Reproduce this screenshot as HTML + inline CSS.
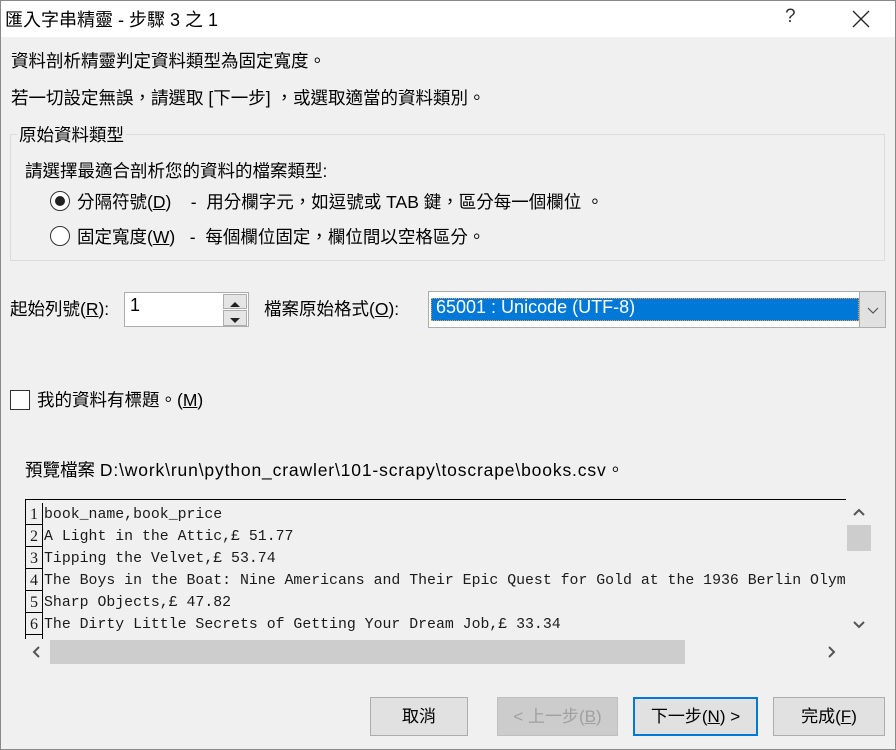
<!DOCTYPE html>
<html><head><meta charset="utf-8"><style>
*{margin:0;padding:0;box-sizing:border-box}
body{width:896px;height:750px;background:#f0f0f0;font-family:"Liberation Sans","Noto Sans CJK TC",sans-serif;font-size:17.5px;color:#000;position:relative;overflow:hidden}
.a{position:absolute;white-space:nowrap}
u{text-decoration:underline}
.btn{position:absolute;top:697px;height:39px;border:1px solid #adadad;background:#e1e1e1;text-align:center;line-height:37px;font-size:17px}
.mono{font-family:"Liberation Mono",monospace;font-size:14.85px;color:#1a1a1a}
.row{position:absolute;left:0;height:22px;line-height:22px}
.num{position:absolute;left:0;width:17px;height:22px;border-right:1px solid #000;border-bottom:1px solid #000;text-align:center;font-family:"Liberation Serif",serif;font-size:16px;line-height:24px}
.txt{position:absolute;left:18px;top:1px}
</style></head><body>
<div class="a" style="left:0;top:0;width:896px;height:750px;border:1px solid #888"></div>
<div class="a" style="left:1px;top:1px;width:894px;height:36px;background:#fff"></div>
<div class="a" style="left:5px;top:6px;font-size:18px">匯入字串精靈 - 步驟 3 之 1</div>
<div class="a" style="left:785px;top:6px;font-size:19px;color:#333">?</div>
<svg class="a" style="left:852px;top:10px" width="18" height="18"><path d="M1 1L17 17M17 1L1 17" stroke="#222" stroke-width="1.3"/></svg>

<div class="a" style="left:11px;top:48px">資料剖析精靈判定資料類型為固定寬度。</div>
<div class="a" style="left:11px;top:85px">若一切設定無誤，請選取 [下一步] ，或選取適當的資料類別。</div>

<div class="a" style="left:10px;top:134px;width:875px;height:127px;border:1px solid #dcdcdc"></div>
<div class="a" style="left:17px;top:122px;background:#f0f0f0;padding:0 2px">原始資料類型</div>
<div class="a" style="left:25px;top:158px">請選擇最適合剖析您的資料的檔案類型:</div>
<div class="a" style="left:50px;top:191px;width:20px;height:20px;border:1px solid #333;border-radius:50%;background:#fff"><div style="position:absolute;left:4px;top:4px;width:10px;height:10px;border-radius:50%;background:#222"></div></div>
<div class="a" style="left:77px;top:189px">分隔符號(<u>D</u>)&nbsp;&nbsp;&nbsp;&nbsp;-&nbsp; 用分欄字元，如逗號或 TAB 鍵，區分每一個欄位 。</div>
<div class="a" style="left:50px;top:226px;width:20px;height:20px;border:1px solid #333;border-radius:50%;background:#fff"></div>
<div class="a" style="left:77px;top:224px">固定寬度(<u>W</u>)&nbsp;&nbsp;&nbsp;-&nbsp; 每個欄位固定，欄位間以空格區分。</div>

<div class="a" style="left:10px;top:296px">起始列號(<u>R</u>):</div>
<div class="a" style="left:124px;top:292px;width:125px;height:35px;border:1px solid #adadad;background:#fff"></div>
<div class="a" style="left:130px;top:295px;font-size:18px">1</div>
<div class="a" style="left:223px;top:294px;width:24px;height:15px;border:1px solid #adadad;background:#e5e5e5"><svg width="22" height="13"><path d="M6 9L11 4L16 9Z" fill="#222"/></svg></div>
<div class="a" style="left:223px;top:310px;width:24px;height:16px;border:1px solid #adadad;background:#e5e5e5"><svg width="22" height="14"><path d="M6 5L11 10L16 5Z" fill="#222"/></svg></div>
<div class="a" style="left:264px;top:296px">檔案原始格式(<u>O</u>):</div>
<div class="a" style="left:428px;top:291px;width:458px;height:37px;border:1px solid #adadad;background:#fff"></div>
<div class="a" style="left:431px;top:298px;width:428px;height:23px;background:#0078d7;border:1px dotted #f0a040"></div>
<div class="a" style="left:436px;top:297px;color:#fff;font-size:18px">65001 : Unicode (UTF-8)</div>
<div class="a" style="left:859px;top:292px;width:26px;height:35px;background:#e1e1e1;border-left:1px solid #adadad"><svg width="26" height="35"><path d="M8 16L13 21L18 16" stroke="#555" fill="none" stroke-width="1.2"/></svg></div>

<div class="a" style="left:10px;top:390px;width:20px;height:20px;border:1px solid #333;background:#fff"></div>
<div class="a" style="left:37px;top:387px">我的資料有標題。(<u>M</u>)</div>

<div class="a" style="left:25px;top:457px">預覽檔案 <span style="letter-spacing:0.85px">D:\work\run\python_crawler\101-scrapy\toscrape\books.csv</span>。</div>

<div class="a" style="left:25px;top:499px;width:822px;height:140px;border:1px solid #000;border-bottom:none;overflow:hidden;background:#f0f0f0">
<div class="mono" style="position:absolute;left:0;top:3px;width:822px">
<div class="row" style="top:0"><div class="num">1</div><div class="txt">book_name,book_price</div></div>
<div class="row" style="top:22px"><div class="num">2</div><div class="txt">A Light in the Attic,£ 51.77</div></div>
<div class="row" style="top:44px"><div class="num">3</div><div class="txt">Tipping the Velvet,£ 53.74</div></div>
<div class="row" style="top:66px"><div class="num">4</div><div class="txt">The Boys in the Boat: Nine Americans and Their Epic Quest for Gold at the 1936 Berlin Olympics,£ 22.60</div></div>
<div class="row" style="top:88px"><div class="num">5</div><div class="txt">Sharp Objects,£ 47.82</div></div>
<div class="row" style="top:110px"><div class="num">6</div><div class="txt">The Dirty Little Secrets of Getting Your Dream Job,£ 33.34</div></div>
<div class="row" style="top:132px"><div class="num"></div></div>
</div></div>
<div class="a" style="left:846px;top:499px;width:26px;height:140px;background:#f0f0f0"></div>
<svg class="a" style="left:850px;top:505px" width="18" height="14"><path d="M4 10L9 5L14 10" stroke="#555" fill="none" stroke-width="2"/></svg>
<div class="a" style="left:847px;top:525px;width:24px;height:26px;background:#cdcdcd"></div>
<svg class="a" style="left:850px;top:618px" width="18" height="14"><path d="M4 4L9 9L14 4" stroke="#555" fill="none" stroke-width="2"/></svg>
<div class="a" style="left:25px;top:639px;width:822px;height:26px;background:#f0f0f0"></div>
<svg class="a" style="left:30px;top:644px" width="14" height="16"><path d="M9 3L4 8L9 13" stroke="#555" fill="none" stroke-width="2"/></svg>
<div class="a" style="left:50px;top:640px;width:635px;height:24px;background:#cdcdcd"></div>
<svg class="a" style="left:825px;top:644px" width="14" height="16"><path d="M4 3L9 8L4 13" stroke="#555" fill="none" stroke-width="2"/></svg>

<div class="btn" style="left:370px;width:98px">取消</div>
<div class="btn" style="left:497px;width:121px;background:#cccccc;border-color:#bfbfbf;color:#a0a0a0">&lt; 上一步(<u>B</u>)</div>
<div class="btn" style="left:633px;width:125px;border:2px solid #0078d7;line-height:35px">下一步(<u>N</u>) &gt;</div>
<div class="btn" style="left:773px;width:112px">完成(<u>F</u>)</div>
</body></html>
